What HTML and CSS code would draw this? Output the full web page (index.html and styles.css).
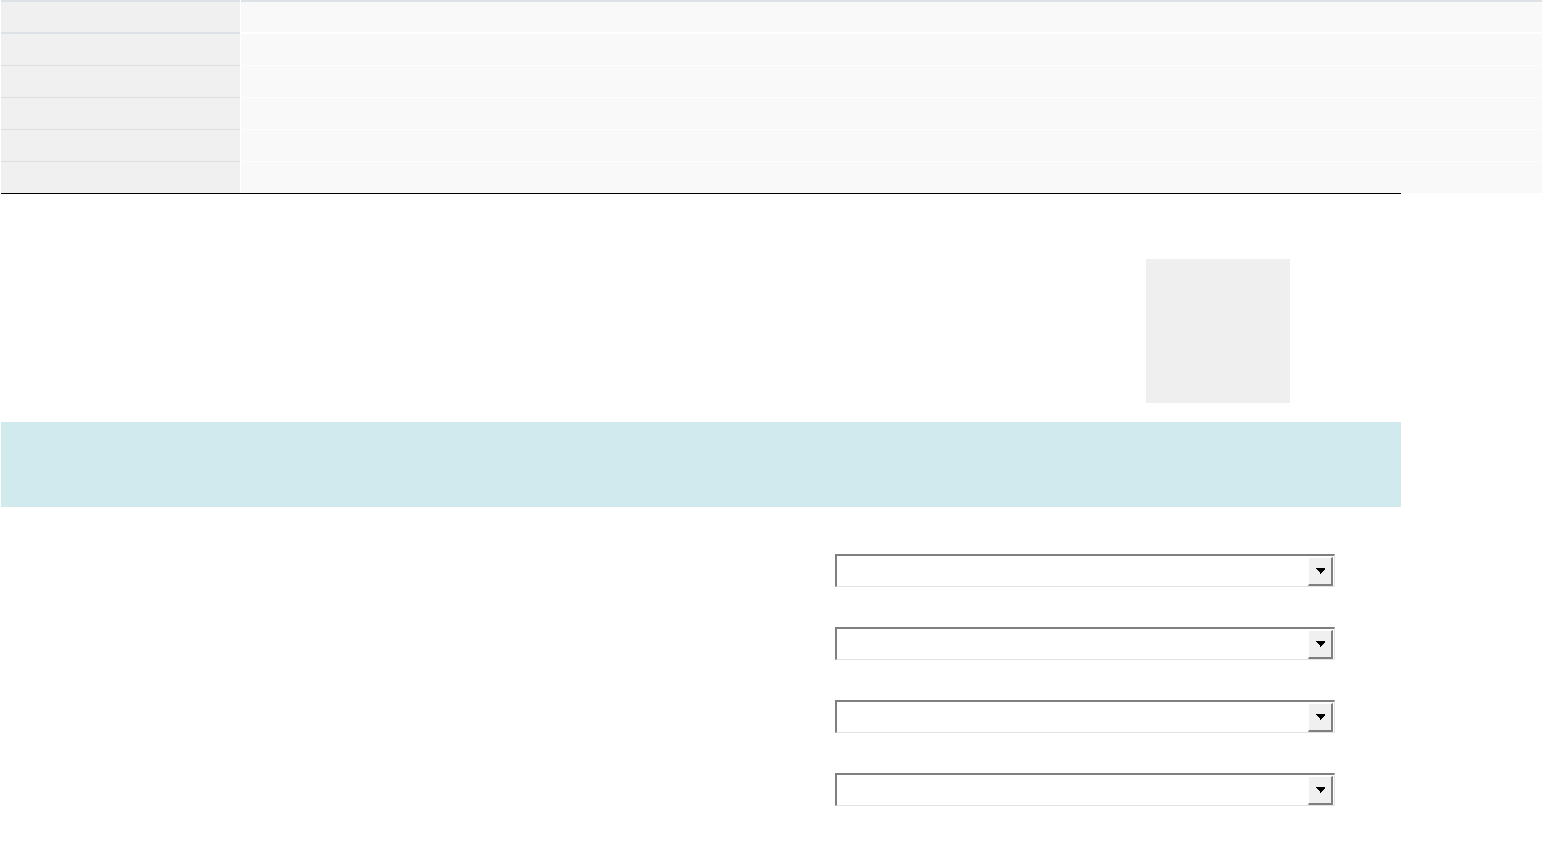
FILE: index.html
```html
<!DOCTYPE html>
<html lang="en">
<head>
<meta charset="utf-8">
<title>Details</title>
<link rel="stylesheet" href="styles.css">
</head>
<body>
<table class="info">
  <tbody>
    <tr class="first"><th></th><td></td></tr>
    <tr><th></th><td></td></tr>
    <tr><th></th><td></td></tr>
    <tr><th></th><td></td></tr>
    <tr><th></th><td></td></tr>
    <tr class="last"><th></th><td></td></tr>
  </tbody>
</table>
<main class="main">
  <section class="hero">
    <div class="thumb"></div>
  </section>
  <section class="band"></section>
  <form class="form">
    <div class="row"><label class="label"></label><div class="select"><span class="value"></span><span class="btn"><svg width="11" height="6" viewBox="0 0 11 6" shape-rendering="crispEdges"><polygon points="1,0 10,0 10,1 6,5 6,6 5,6 5,5 1,1" fill="#000"/></svg></span></div></div>
    <div class="row"><label class="label"></label><div class="select"><span class="value"></span><span class="btn"><svg width="11" height="6" viewBox="0 0 11 6" shape-rendering="crispEdges"><polygon points="1,0 10,0 10,1 6,5 6,6 5,6 5,5 1,1" fill="#000"/></svg></span></div></div>
    <div class="row"><label class="label"></label><div class="select"><span class="value"></span><span class="btn"><svg width="11" height="6" viewBox="0 0 11 6" shape-rendering="crispEdges"><polygon points="1,0 10,0 10,1 6,5 6,6 5,6 5,5 1,1" fill="#000"/></svg></span></div></div>
    <div class="row"><label class="label"></label><div class="select"><span class="value"></span><span class="btn"><svg width="11" height="6" viewBox="0 0 11 6" shape-rendering="crispEdges"><polygon points="1,0 10,0 10,1 6,5 6,6 5,6 5,5 1,1" fill="#000"/></svg></span></div></div>
  </form>
</main>
</body>
</html>
```

FILE: styles.css
```css
* { box-sizing: border-box; }
html, body {
  margin: 0;
  padding: 0;
  background: #fff;
  font-family: "Liberation Sans", Arial, sans-serif;
  font-size: 14px;
  overflow: hidden;
}

.info {
  width: 1543px;
  border-collapse: separate;
  border-spacing: 1px 0;
  margin: 0;
}
.info th,
.info td {
  padding: 0;
  height: 32px;
}
.info th {
  width: 239px;
  background: #f0f0f0;
  border-bottom: 1px solid #dddddd;
}
.info td {
  background: #f9f9f9;
  border-bottom: 1px solid #fdfdfd;
}
.info .first th,
.info .first td {
  height: 34px;
  border-top: 2px solid #dee2e6;
}
.info .first th { border-bottom: 2px solid #dee2e6; }
.info .first td { border-bottom: 2px solid #ffffff; }
.info .last th,
.info .last td {
  height: 31px;
  border-bottom: 0;
}

.main {
  width: 1400px;
  margin-left: 1px;
  border-top: 1px solid #000;
}

.hero {
  display: flex;
  justify-content: flex-end;
  padding: 65px 111px 19px 0;
}
.thumb {
  width: 144px;
  height: 144px;
  background: #efefef;
}

.band {
  height: 85px;
  background: #d1eaee;
}

.form {
  display: flex;
  flex-direction: column;
  gap: 40px;
  padding-top: 47px;
}
.row {
  display: grid;
  grid-template-columns: 834px 500px;
}
.select {
  display: flex;
  height: 33px;
  border-top: 2px solid #7f7f7f;
  border-left: 2px solid #7f7f7f;
  border-right: 1px solid #e3e3e3;
  border-bottom: 1px solid #e3e3e3;
  background: #fff;
  padding: 0 1px 0 0;
}
.value { flex: 1; }
.btn {
  width: 25px;
  height: 29px;
  margin-top: 1px;
  display: flex;
  align-items: center;
  justify-content: center;
  background: #f0f0f0;
  border-top: 1px solid #ffffff;
  border-left: 1px solid #ffffff;
  border-right: 2px solid #7f7f7f;
  border-bottom: 2px solid #7f7f7f;
}
.btn svg { display: block; }
```
